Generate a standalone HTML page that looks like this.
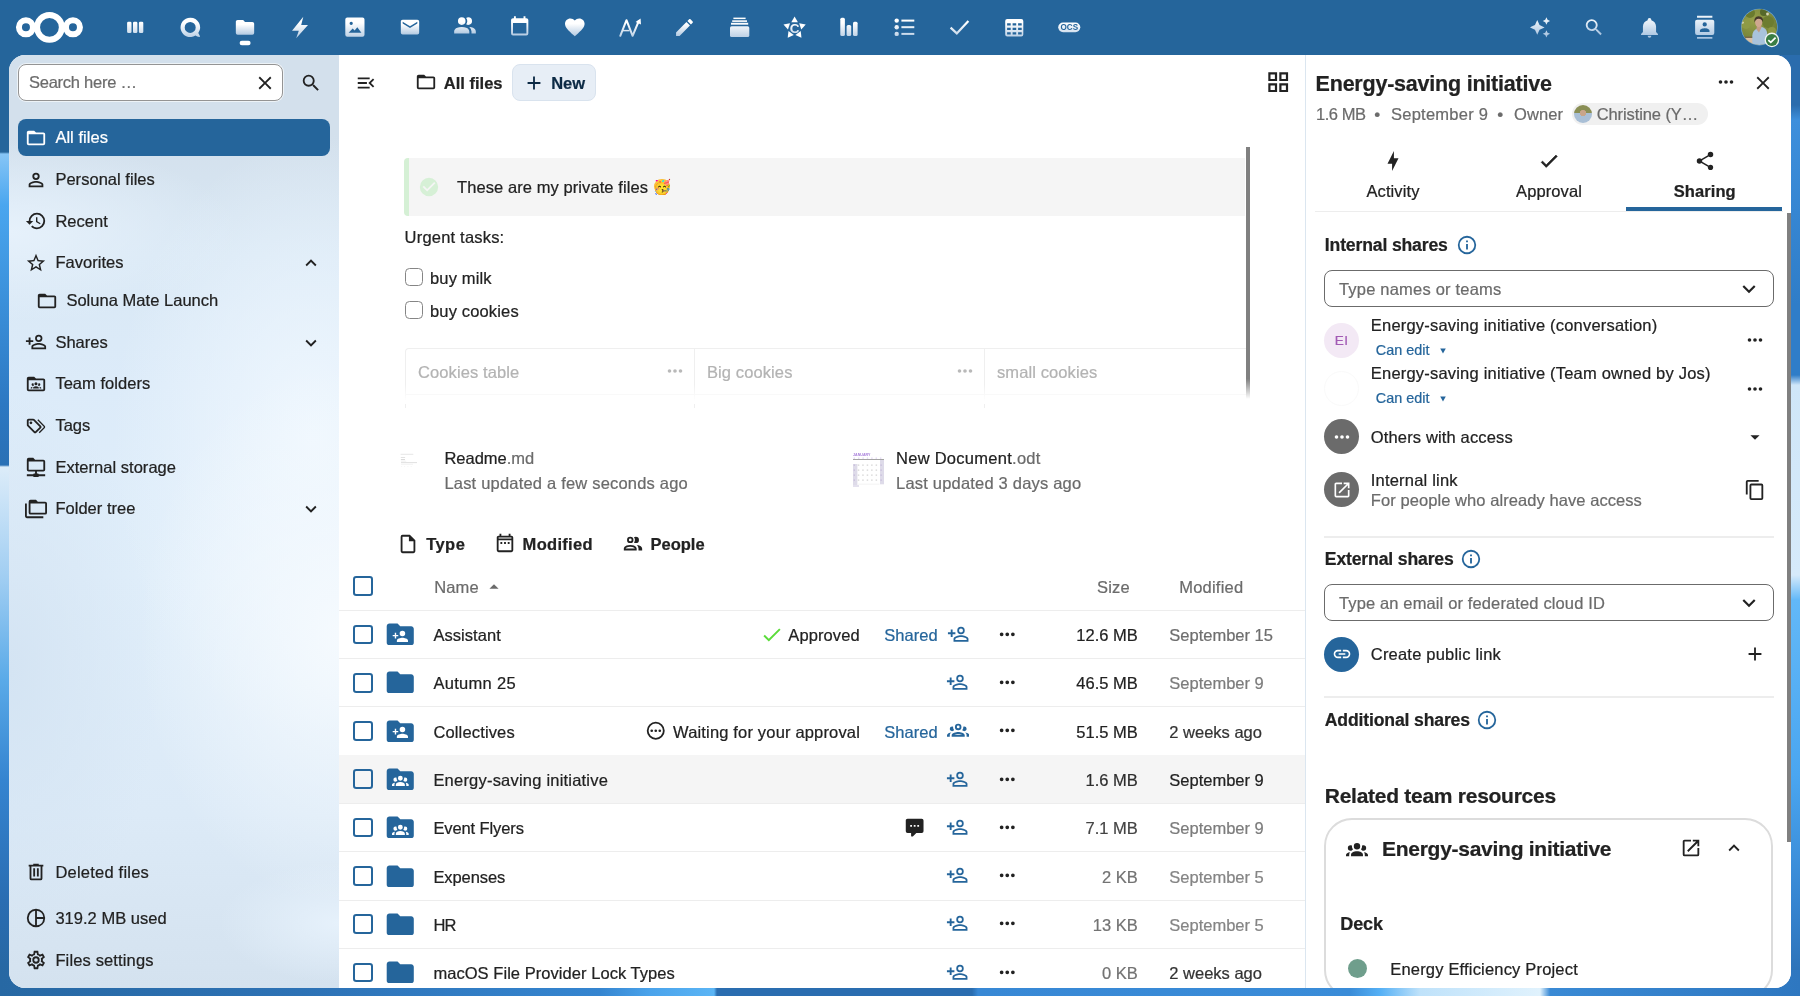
<!DOCTYPE html>
<html lang="en"><head><meta charset="utf-8"><title>All files - Nextcloud</title>
<style>
*{box-sizing:border-box;margin:0;padding:0}
html,body{width:1800px;height:996px;overflow:hidden}
body{font-family:"Liberation Sans",sans-serif;font-size:16.5px;color:#222;-webkit-text-stroke:.22px;background:#25659b;position:relative}
svg.ic{display:block;flex:none}
#bg{position:absolute;inset:0;background:#25659b}
#bgL{position:absolute;left:0;top:55px;width:30px;height:941px;background:linear-gradient(180deg,#25659b 0,#25659b 97px,#86c5f6 99px,#4aa6ef 150px,#3a8fd9 250px,#2d78c2 350px,#2a70b5 410px,#dcecf9 412px,#9fcdf2 525px,#5aaae8 625px,#3584d0 725px,#2a6db2 845px,#26669f 933px,#26669f 100%)}
#bgR{position:absolute;left:1770px;top:55px;width:30px;height:941px;background:linear-gradient(180deg,#2a6cad 0,#2a6cad 50px,#3d8fdc 65px,#2f7dc8 250px,#2f7dc8 320px,#cfe6f8 330px,#d6eafa 520px,#62b8f8 545px,#4aa6f0 720px,#3584d0 850px,#2a6db0 941px)}
#bgB{position:absolute;left:0;top:970px;width:1800px;height:26px;background:linear-gradient(90deg,#2768a3 0,#2d72b5 300px,#3585d0 600px,#4aa3eb 650px,#5bb5f5 714px,#2a6db0 717px,#2a6db0 972px,#3888d5 978px,#3a8cd8 1350px,#55b0f5 1380px,#bfe2fa 1420px,#e0f2fd 1540px,#3a8ad5 1550px,#2e77c0 1800px)}
#header{position:absolute;left:0;top:0;width:1800px;height:55px;background:#25659b}
#header .hi{position:absolute;top:16px;width:22px;height:22px;color:#fff}
#content{position:absolute;left:9px;top:55px;width:1782px;height:933px;border-radius:16px;overflow:hidden;background:#fff}
.abs{position:absolute}
/* nav */
#nav{position:absolute;left:0;top:0;width:330px;height:933px;background:
 radial-gradient(ellipse 200px 270px at 100% 62%,#f5fafe 0,rgba(245,250,254,0) 100%),
 radial-gradient(ellipse 200px 300px at 92% 41%,#eff7fe 0,rgba(239,247,254,0) 100%),
 radial-gradient(ellipse 120px 60px at 100% 93%,#e6f1fb 0,rgba(230,241,251,0) 100%),
 radial-gradient(ellipse 230px 90px at 0% 19%,#e6f1fb 0,rgba(230,241,251,0) 100%),
 radial-gradient(ellipse 150px 280px at 0% 66%,#d4e4f3 0,rgba(212,228,243,0) 100%),
 linear-gradient(180deg,#d3e0ec 0,#d3e0ec 80px,#d9e8f5 200px,#dcebf9 330px,#e0eefa 520px,#dceaf7 760px,#d4e2ef 933px)}
#nav .item{position:absolute;left:9px;width:312px;height:37px;border-radius:8px;display:flex;align-items:center;color:#222;white-space:nowrap}
#nav .item.active{background:#25659b;color:#fff}
#nav .item svg.lead{margin-left:7.2px}
#nav .item span.t{margin-left:8.2px;letter-spacing:.03px}
#nav .item svg.chev{position:absolute;right:8px;top:8px}
/* main */
#main{position:absolute;left:330px;top:0;width:966px;height:933px;background:#fff;overflow:hidden}
/* aside */
#aside{position:absolute;left:1296px;top:0;width:486px;height:933px;background:#fff;border-left:1px solid #dbe6f0;overflow:hidden}
#header,#nav,#main,#aside{will-change:transform}

</style></head>
<body>
<div id="bg"></div><div id="bgL"></div><div id="bgR"></div><div id="bgB"></div>
<div id="header">
<svg class="abs" style="left:0;top:0" width="1800" height="55" viewBox="0 0 1800 55">
<defs><linearGradient id="hg" gradientUnits="userSpaceOnUse" x1="0" y1="16" x2="0" y2="39"><stop offset="0" stop-color="#fff"/><stop offset=".3" stop-color="#fff"/><stop offset="1" stop-color="#b3cae2"/></linearGradient><linearGradient id="hgb" x1="0" y1="0" x2="0" y2="1"><stop offset="0" stop-color="#fff"/><stop offset=".3" stop-color="#fff"/><stop offset="1" stop-color="#b3cae2"/></linearGradient><linearGradient id="hg2b" x1="0" y1="0" x2="0" y2="1"><stop offset="0" stop-color="#eef4fa"/><stop offset=".25" stop-color="#e4edf6"/><stop offset="1" stop-color="#a3c0de"/></linearGradient></defs>
<g fill="none" stroke="#fff" stroke-width="6"><circle cx="49.45" cy="27.35" r="12.4"/><circle cx="25.95" cy="27.35" r="7"/><circle cx="72.95" cy="27.35" r="7"/></g>
<rect x="127.1" y="21.7" width="4.4" height="11.3" rx="1.3" fill="url(#hg)"/>
<rect x="133.0" y="21.7" width="4.4" height="11.3" rx="1.3" fill="url(#hg)"/>
<rect x="138.9" y="21.7" width="4.4" height="11.3" rx="1.3" fill="url(#hg)"/>
<path fill="url(#hg)" fill-rule="evenodd" d="M190.2 17.7a9.7 9.7 0 1 0 5.2 17.9c1.3.8 3.4 1.7 4.4 1.3.5-.5-.6-2.4-1.5-3.9A9.7 9.7 0 0 0 190.2 17.7Zm0 4.2a5.5 5.5 0 1 1 0 11a5.5 5.5 0 0 1 0-11Z"/>
<path fill="url(#hgb)" transform="translate(234.00,16.40) scale(0.9167)" d="M10,4H4C2.89,4 2,4.89 2,6V18A2,2 0 0,0 4,20H20A2,2 0 0,0 22,18V8C22,6.89 21.1,6 20,6H12L10,4Z"/>
<rect x="239.6" y="40.8" width="11" height="4.5" rx="2.25" fill="#fff"/>
<path fill="url(#hg)" d="M303.3 16.8L292 30.7H298.8L296.2 38.2L308 25.1H301.2Z"/>
<path fill="url(#hg)" fill-rule="evenodd" d="M347.3 17.5H362.5A2 2 0 0 1 364.5 19.5V34.7A2 2 0 0 1 362.5 36.7H347.3A2 2 0 0 1 345.3 34.7V19.5A2 2 0 0 1 347.3 17.5ZM351.2 21.8a1.6 1.6 0 1 0 .01 0ZM348.6 32.8H361.4L357.3 27.2L354.6 30.6L352.7 28.4Z"/>
<path fill="url(#hgb)" transform="translate(399.00,16.20) scale(0.9167)" d="M20,8L12,13L4,8V6L12,11L20,6M20,4H4C2.89,4 2,4.89 2,6V18A2,2 0 0,0 4,20H20A2,2 0 0,0 22,18V6C22,4.89 21.1,4 20,4Z"/>
<path fill="url(#hgb)" transform="translate(452.00,13.00) scale(1.0833)" d="M16 17V19H2V17S2 13 9 13 16 17 16 17M12.5 7.5A3.5 3.5 0 1 0 9 11A3.5 3.5 0 0 0 12.5 7.5M15.94 13A5.32 5.32 0 0 1 18 17V19H22V17S22 13.37 15.94 13M15 4A3.39 3.39 0 0 0 13.07 4.59A5 5 0 0 1 13.07 10.41A3.39 3.39 0 0 0 15 11A3.5 3.5 0 0 0 15 4Z"/>
<path fill="url(#hgb)" transform="translate(508.20,15.30) scale(0.9583)" d="M19,19H5V8H19M16,1V3H8V1H6V3H5C3.89,3 3,3.89 3,5V19A2,2 0 0,0 5,21H19A2,2 0 0,0 21,19V5C21,3.89 20.1,3 19,3H18V1"/>
<path fill="url(#hgb)" transform="translate(563.05,15.45) scale(0.9792)" d="M12,21.35L10.55,20.03C5.4,15.36 2,12.27 2,8.5C2,5.41 4.42,3 7.5,3C9.24,3 10.91,3.81 12,5.08C13.09,3.81 14.76,3 16.5,3C19.58,3 22,5.41 22,8.5C22,12.27 18.6,15.36 13.45,20.03L12,21.35Z"/>
<path fill="none" stroke="url(#hg)" stroke-width="2" stroke-linejoin="round" stroke-linecap="round" d="M620.3 35.8L626.5 20.2L632.6 35.8L638.8 21"/><path fill="none" stroke="url(#hg)" stroke-width="1.5" d="M622.5 30.6H629.5"/><path fill="url(#hg)" d="M640.6 18.4L641 24.6L635.6 22Z"/>
<path fill="url(#hgb)" transform="translate(673.25,16.25) scale(0.9375)" d="M20.71,7.04C21.1,6.65 21.1,6 20.71,5.63L18.37,3.29C18,2.9 17.35,2.9 16.96,3.29L15.12,5.12L18.87,8.87M3,17.25V21H6.75L17.81,9.93L14.06,6.18L3,17.25Z"/>
<rect x="733.4" y="17.6" width="12.2" height="1.5" fill="url(#hg)"/><rect x="732.2" y="20.3" width="14.8" height="1.6" fill="url(#hg)"/><rect x="731" y="22.8" width="17.2" height="1.9" fill="url(#hg)"/><rect x="730" y="26.3" width="19.3" height="10.7" rx="1.6" fill="url(#hg)"/>
<path fill="url(#hg)" d="M794.6 16.5L797.9 22.3H791.3Z" transform="rotate(0 794.6 28.2)"/>
<path fill="url(#hg)" d="M794.6 16.5L797.9 22.3H791.3Z" transform="rotate(72 794.6 28.2)"/>
<path fill="url(#hg)" d="M794.6 16.5L797.9 22.3H791.3Z" transform="rotate(144 794.6 28.2)"/>
<path fill="url(#hg)" d="M794.6 16.5L797.9 22.3H791.3Z" transform="rotate(216 794.6 28.2)"/>
<path fill="url(#hg)" d="M794.6 16.5L797.9 22.3H791.3Z" transform="rotate(288 794.6 28.2)"/>
<text x="794.7" y="33.3" text-anchor="middle" font-family="Liberation Sans,sans-serif" font-weight="bold" font-size="13.5" fill="url(#hg)">C</text>
<rect x="840.3" y="17.8" width="4.6" height="18.1" rx="1.5" fill="url(#hg)"/><rect x="846.6" y="24.9" width="4.6" height="11" rx="1.5" fill="url(#hg)"/><rect x="853" y="21.7" width="4.6" height="14.2" rx="1.5" fill="url(#hg)"/>
<circle cx="896.7" cy="20.6" r="2.2" fill="url(#hg)"/><rect x="901.4" y="19.6" width="12.9" height="2" fill="url(#hg)"/>
<circle cx="896.7" cy="27.2" r="2.2" fill="url(#hg)"/><rect x="901.4" y="26.2" width="12.9" height="2" fill="url(#hg)"/>
<circle cx="896.7" cy="33.9" r="2.2" fill="url(#hg)"/><rect x="901.4" y="32.9" width="12.9" height="2" fill="url(#hg)"/>
<path fill="none" stroke="url(#hg)" stroke-width="2.2" d="M950.6 27.6L956.8 33.4L968.4 20.9"/>
<path fill="url(#hg)" fill-rule="evenodd" d="M1007.2 19.1H1021.3A2 2 0 0 1 1023.3 21.1V34.6A2 2 0 0 1 1021.3 36.6H1007.2A2 2 0 0 1 1005.2 34.6V21.1A2 2 0 0 1 1007.2 19.1ZM1007.1 23.3h3.6v2.2h-3.6ZM1007.1 27.8h3.6v2.2h-3.6ZM1007.1 32.3h3.6v2.2h-3.6ZM1012.6 23.3h3.6v2.2h-3.6ZM1012.6 27.8h3.6v2.2h-3.6ZM1012.6 32.3h3.6v2.2h-3.6ZM1018.1 23.3h3.6v2.2h-3.6ZM1018.1 27.8h3.6v2.2h-3.6ZM1018.1 32.3h3.6v2.2h-3.6Z"/>
<rect x="1058.2" y="22.5" width="22.1" height="9.7" rx="4.85" fill="url(#hg)"/><text x="1069.3" y="30.4" text-anchor="middle" font-family="Liberation Sans,sans-serif" font-weight="bold" font-size="8.4" fill="#25659b" textLength="17.6" lengthAdjust="spacingAndGlyphs">OCS</text>
<defs><linearGradient id="hg2" gradientUnits="userSpaceOnUse" x1="0" y1="16" x2="0" y2="39"><stop offset="0" stop-color="#eef4fa"/><stop offset=".25" stop-color="#e6eef7"/><stop offset="1" stop-color="#a3c0de"/></linearGradient></defs>
<path fill="url(#hg2b)" transform="translate(1529.00,16.40) scale(0.9167)" d="M19,1L17.74,3.75L15,5L17.74,6.26L19,9L20.25,6.26L23,5L20.25,3.75M9,4L6.5,9.5L1,12L6.5,14.5L9,20L11.5,14.5L17,12L11.5,9.5M19,15L17.74,17.74L15,19L17.74,20.25L19,23L20.25,20.25L23,19L20.25,17.74"/>
<path fill="url(#hg2b)" transform="translate(1583.00,16.40) scale(0.9167)" d="M9.5,3A6.5,6.5 0 0,1 16,9.5C16,11.11 15.41,12.59 14.44,13.73L14.71,14H15.5L20.5,19L19,20.5L14,15.5V14.71L13.73,14.44C12.59,15.41 11.11,16 9.5,16A6.5,6.5 0 0,1 3,9.5A6.5,6.5 0 0,1 9.5,3M9.5,5C7,5 5,7 5,9.5C5,12 7,14 9.5,14C12,14 14,12 14,9.5C14,7 12,5 9.5,5Z"/>
<path fill="url(#hg2b)" transform="translate(1638.25,16.15) scale(0.9375)" d="M21,19V20H3V19L5,17V11C5,7.9 7.03,5.17 10,4.29C10,4.19 10,4.1 10,4A2,2 0 0,1 12,2A2,2 0 0,1 14,4C14,4.1 14,4.19 14,4.29C16.97,5.17 19,7.9 19,11V17L21,19M14,21A2,2 0 0,1 12,23A2,2 0 0,1 10,21"/>
<path fill="url(#hg2b)" transform="translate(1693.20,15.80) scale(0.9583)" d="M20,0H4V2H20V0M4,24H20V22H4V24M20,4H4A2,2 0 0,0 2,6V18A2,2 0 0,0 4,20H20A2,2 0 0,0 22,18V6A2,2 0 0,0 20,4M12,6.75A2.25,2.25 0 0,1 14.25,9A2.25,2.25 0 0,1 12,11.25A2.25,2.25 0 0,1 9.75,9A2.25,2.25 0 0,1 12,6.75M17,17H7V15.5C7,13.83 10.33,13 12,13C13.67,13 17,13.83 17,15.5V17Z"/>
</svg>
<svg class="abs" style="left:1738px;top:6px" width="46" height="46" viewBox="1738 6 46 46">
<defs><clipPath id="avc"><circle cx="1759.35" cy="27.1" r="17.8"/></clipPath>
<radialGradient id="avg" cx="0.35" cy="0.3" r="0.8"><stop offset="0" stop-color="#97a04a"/><stop offset=".6" stop-color="#79863a"/><stop offset="1" stop-color="#5f6e2c"/></radialGradient></defs>
<circle cx="1759.35" cy="27.1" r="18.4" fill="#6ea4d8"/>
<g clip-path="url(#avc)">
<rect x="1740" y="8" width="40" height="40" fill="url(#avg)"/>
<circle cx="1750" cy="13" r="5" fill="#6a7a2e"/><circle cx="1768" cy="22" r="6" fill="#6d7c30"/><circle cx="1764" cy="12" r="4" fill="#56682a"/><circle cx="1746" cy="24" r="5" fill="#8e9a45"/><circle cx="1772" cy="31" r="4" fill="#8d9843"/>
<circle cx="1767.5" cy="14" r="1.4" fill="#d8d6b8"/><circle cx="1742.6" cy="22.6" r="1.2" fill="#d9d7b5"/>
<rect x="1740" y="36.5" width="14" height="2" fill="#7b6a45"/>
<rect x="1740" y="38" width="14" height="10" fill="#d8bfa6"/>
<path d="M1752.3 46V35.5Q1752.6 30.5 1757 28.5L1761.5 26.8Q1766.5 28.2 1767.2 33V46Z" fill="#a9c3dc"/>
<path d="M1756.5 29.5L1759 32.5L1761.5 27.5L1760.5 24H1757Z" fill="#c49c84"/>
<ellipse cx="1758.7" cy="22.6" rx="3.6" ry="4.6" fill="#cfa78f"/>
<path d="M1754.4 22.5Q1753.6 16.5 1758.6 16.2Q1763.6 16.3 1763 22Q1762 19 1758.6 18.8Q1755.6 19 1754.4 22.5Z" fill="#46372b"/>
</g>
<circle cx="1771.9" cy="39.9" r="7.3" fill="#f2f6f2"/><circle cx="1771.9" cy="39.9" r="6" fill="#3a7d44"/>
<path fill="none" stroke="#fff" stroke-width="1.7" d="M1768.3 40.1L1770.8 42.4L1775.6 37.6"/>
</svg>
</div>
<div id="content">
<div id="nav">
<div class="abs" style="left:9px;top:9px;width:265px;height:37px;border-radius:8px;background:#fff;border:1px solid #949494;box-shadow:0 0 0 1px rgba(255,255,255,.6)"></div>
<div class="abs" style="left:20px;top:9px;height:37px;line-height:37px;color:#6b6b6b;letter-spacing:-.25px">Search here …</div>
<svg class="ic " width="22" height="22" viewBox="0 0 24 24" style="position:absolute;left:245px;top:16.5px"><path fill="#222" d="M19,6.41L17.59,5L12,10.59L6.41,5L5,6.41L10.59,12L5,17.59L6.41,19L12,13.41L17.59,19L19,17.59L13.41,12L19,6.41Z"/></svg>
<svg class="ic " width="22" height="22" viewBox="0 0 24 24" style="position:absolute;left:291px;top:16.5px"><path fill="#222" d="M9.5,3A6.5,6.5 0 0,1 16,9.5C16,11.11 15.41,12.59 14.44,13.73L14.71,14H15.5L20.5,19L19,20.5L14,15.5V14.71L13.73,14.44C12.59,15.41 11.11,16 9.5,16A6.5,6.5 0 0,1 3,9.5A6.5,6.5 0 0,1 9.5,3M9.5,5C7,5 5,7 5,9.5C5,12 7,14 9.5,14C12,14 14,12 14,9.5C14,7 12,5 9.5,5Z"/></svg>
<div class="item active" style="top:64px;"><svg class="ic lead" width="22" height="22" viewBox="0 0 24 24" style="margin-left:7.2px"><path fill="currentColor" d="M20,18H4V8H20M20,6H12L10,4H4C2.89,4 2,4.89 2,6V18A2,2 0 0,0 4,20H20A2,2 0 0,0 22,18V8C22,6.89 21.1,6 20,6Z"/></svg><span class="t">All files</span></div>
<div class="item" style="top:106px;"><svg class="ic lead" width="22" height="22" viewBox="0 0 24 24" style="margin-left:7.2px"><path fill="currentColor" d="M12,4A4,4 0 0,1 16,8A4,4 0 0,1 12,12A4,4 0 0,1 8,8A4,4 0 0,1 12,4M12,6A2,2 0 0,0 10,8A2,2 0 0,0 12,10A2,2 0 0,0 14,8A2,2 0 0,0 12,6M12,13C14.67,13 20,14.33 20,17V20H4V17C4,14.33 9.33,13 12,13M12,14.9C9.03,14.9 5.9,16.36 5.9,17V18.1H18.1V17C18.1,16.36 14.97,14.9 12,14.9Z"/></svg><span class="t">Personal files</span></div>
<div class="item" style="top:147.5px;"><svg class="ic lead" width="22" height="22" viewBox="0 0 24 24" style="margin-left:7.2px"><path fill="currentColor" d="M13.5,8H12V13L16.28,15.54L17,14.33L13.5,12.25V8M13,3A9,9 0 0,0 4,12H1L4.96,16.03L9,12H6A7,7 0 0,1 13,5A7,7 0 0,1 20,12A7,7 0 0,1 13,19C11.07,19 9.32,18.21 8.06,16.94L6.64,18.36C8.27,20 10.5,21 13,21A9,9 0 0,0 22,12A9,9 0 0,0 13,3"/></svg><span class="t">Recent</span></div>
<div class="item" style="top:189px;"><svg class="ic lead" width="22" height="22" viewBox="0 0 24 24" style="margin-left:7.2px"><path fill="currentColor" d="M12,15.39L8.24,17.66L9.23,13.38L5.91,10.5L10.29,10.13L12,6.09L13.71,10.13L18.09,10.5L14.77,13.38L15.76,17.66M22,9.24L14.81,8.63L12,2L9.19,8.63L2,9.24L7.45,13.97L5.82,21L12,17.27L18.18,21L16.54,13.97L22,9.24Z"/></svg><span class="t">Favorites</span><svg class="ic chev" width="22" height="22" viewBox="0 0 24 24" style=""><path fill="currentColor" d="M7.41,15.41L12,10.83L16.59,15.41L18,14L12,8L6,14L7.41,15.41Z"/></svg></div>
<div class="item" style="top:227px;"><svg class="ic lead" width="22" height="22" viewBox="0 0 24 24" style="margin-left:18.2px"><path fill="currentColor" d="M20,18H4V8H20M20,6H12L10,4H4C2.89,4 2,4.89 2,6V18A2,2 0 0,0 4,20H20A2,2 0 0,0 22,18V8C22,6.89 21.1,6 20,6Z"/></svg><span class="t">Soluna Mate Launch</span></div>
<div class="item" style="top:268.5px;"><svg class="ic lead" width="22" height="22" viewBox="0 0 24 24" style="margin-left:7.2px"><path fill="currentColor" d="M15,4A4,4 0 0,0 11,8A4,4 0 0,0 15,12A4,4 0 0,0 19,8A4,4 0 0,0 15,4M15,5.9C16.16,5.9 17.1,6.84 17.1,8C17.1,9.16 16.16,10.1 15,10.1A2.1,2.1 0 0,1 12.9,8A2.1,2.1 0 0,1 15,5.9M4,7V10H1V12H4V15H6V12H9V10H6V7H4M15,13C12.33,13 7,14.33 7,17V20H23V17C23,14.33 17.67,13 15,13M15,14.9C17.97,14.9 21.1,16.36 21.1,17V18.1H8.9V17C8.9,16.36 12,14.9 15,14.9Z"/></svg><span class="t">Shares</span><svg class="ic chev" width="22" height="22" viewBox="0 0 24 24" style=""><path fill="currentColor" d="M7.41,8.58L12,13.17L16.59,8.58L18,10L12,16L6,10L7.41,8.58Z"/></svg></div>
<div class="item" style="top:310px;"><svg class="ic lead" width="22" height="22" viewBox="0 0 24 24" style="margin-left:7.2px"><path fill="currentColor" d="M20,18H4V8H20M20,6H12L10,4H4C2.89,4 2,4.89 2,6V18A2,2 0 0,0 4,20H20A2,2 0 0,0 22,18V8C22,6.89 21.1,6 20,6Z"/><g transform="translate(6.2,7.4) scale(0.48)"><path fill="currentColor" d="M12,5.5A3.5,3.5 0 0,1 15.5,9A3.5,3.5 0 0,1 12,12.5A3.5,3.5 0 0,1 8.5,9A3.5,3.5 0 0,1 12,5.5M5,8C5.56,8 6.08,8.15 6.53,8.42C6.38,9.85 6.8,11.27 7.66,12.38C7.16,13.34 6.16,14 5,14A3,3 0 0,1 2,11A3,3 0 0,1 5,8M19,8A3,3 0 0,1 22,11A3,3 0 0,1 19,14C17.84,14 16.84,13.34 16.34,12.38C17.2,11.27 17.62,9.85 17.47,8.42C17.92,8.15 18.44,8 19,8M5.5,18.25C5.5,16.18 8.41,14.5 12,14.5C15.59,14.5 18.5,16.18 18.5,18.25V20H5.5V18.25M0,20V18.5C0,17.11 1.89,15.94 4.45,15.6C3.86,16.28 3.5,17.22 3.5,18.25V20H0M24,20H20.5V18.25C20.5,17.22 20.14,16.28 19.55,15.6C22.11,15.94 24,17.11 24,18.5V20Z"/></g></svg><span class="t">Team folders</span></div>
<div class="item" style="top:352px;"><svg class="ic lead" width="22" height="22" viewBox="0 0 24 24" style="margin-left:7.2px"><path fill="currentColor" d="M6.5 10C7.3 10 8 9.3 8 8.5S7.3 7 6.5 7 5 7.7 5 8.5 5.7 10 6.5 10M9 6L16 13L11 18L4 11V6H9M9 4H4C2.9 4 2 4.9 2 6V11C2 11.6 2.2 12.1 2.6 12.4L9.6 19.4C9.9 19.8 10.4 20 11 20S12.1 19.8 12.4 19.4L17.4 14.4C17.8 14 18 13.5 18 13C18 12.4 17.8 11.9 17.4 11.6L10.4 4.6C10.1 4.2 9.6 4 9 4M13.5 5.7L14.5 4.7L21.4 11.6C21.8 12 22 12.5 22 13S21.8 14.1 21.4 14.4L16 19.8L15 18.8L20.7 13L13.5 5.7Z"/></svg><span class="t">Tags</span></div>
<div class="item" style="top:393.5px;"><svg class="ic lead" width="22" height="22" viewBox="0 0 24 24" style="margin-left:7.2px"><path fill="currentColor" d="M4,2H9L11,4H20A2,2 0 0,1 22,6V15A2,2 0 0,1 20,17H13V19H14A1,1 0 0,1 15,20H22V22H15A1,1 0 0,1 14,23H10A1,1 0 0,1 9,22H2V20H9A1,1 0 0,1 10,19H11V17H4A2,2 0 0,1 2,15V4A2,2 0 0,1 4,2M4,6V15H20V6H4Z"/></svg><span class="t">External storage</span></div>
<div class="item" style="top:435px;"><svg class="ic lead" width="22" height="22" viewBox="0 0 24 24" style="margin-left:7.2px"><path fill="currentColor" d="M22,4A2,2 0 0,1 24,6V16A2,2 0 0,1 22,18H6A2,2 0 0,1 4,16V4A2,2 0 0,1 6,2H12L14,4H22M2,6V20H20V22H2A2,2 0 0,1 0,20V11H0V6H2M6,6V16H22V6H6Z"/></svg><span class="t">Folder tree</span><svg class="ic chev" width="22" height="22" viewBox="0 0 24 24" style=""><path fill="currentColor" d="M7.41,8.58L12,13.17L16.59,8.58L18,10L12,16L6,10L7.41,8.58Z"/></svg></div>
<div class="item" style="top:798.5px;"><svg class="ic lead" width="22" height="22" viewBox="0 0 24 24" style="margin-left:7.2px"><path fill="currentColor" d="M9,3V4H4V6H5V19A2,2 0 0,0 7,21H17A2,2 0 0,0 19,19V6H20V4H15V3H9M7,6H17V19H7V6M9,8V17H11V8H9M13,8V17H15V8H13Z"/></svg><span class="t"><span style="letter-spacing:.22px">Deleted files</span></span></div>
<div class="item" style="top:844.5px;"><svg class="ic lead" width="22" height="22" viewBox="0 0 24 24" style="margin-left:7.2px"><path fill="currentColor" d="M12,2A10,10 0 1,0 22,12A10,10 0 0,0 12,2M13,4.07A8,8 0 0,1 19.93,11H13M4,12A8,8 0 0,1 11,4.07V19.93A8,8 0 0,1 4,12M13,19.93V13H19.93A8,8 0 0,1 13,19.93Z"/></svg><span class="t">319.2 MB used</span></div>
<div class="item" style="top:886.5px;"><svg class="ic lead" width="22" height="22" viewBox="0 0 24 24" style="margin-left:7.2px"><path fill="currentColor" d="M12,8A4,4 0 0,1 16,12A4,4 0 0,1 12,16A4,4 0 0,1 8,12A4,4 0 0,1 12,8M12,10A2,2 0 0,0 10,12A2,2 0 0,0 12,14A2,2 0 0,0 14,12A2,2 0 0,0 12,10M10,22C9.75,22 9.54,21.82 9.5,21.58L9.13,18.93C8.5,18.68 7.96,18.34 7.44,17.94L4.95,18.95C4.73,19.03 4.46,18.95 4.34,18.73L2.34,15.27C2.21,15.05 2.27,14.78 2.46,14.63L4.57,12.97L4.5,12L4.57,11L2.46,9.37C2.27,9.22 2.21,8.95 2.34,8.73L4.34,5.27C4.46,5.05 4.73,4.96 4.95,5.05L7.44,6.05C7.96,5.66 8.5,5.32 9.13,5.07L9.5,2.42C9.54,2.18 9.75,2 10,2H14C14.25,2 14.46,2.18 14.5,2.42L14.87,5.07C15.5,5.32 16.04,5.66 16.56,6.05L19.05,5.05C19.27,4.96 19.54,5.05 19.66,5.27L21.66,8.73C21.79,8.95 21.73,9.22 21.54,9.37L19.43,11L19.5,12L19.43,13L21.54,14.63C21.73,14.78 21.79,15.05 21.66,15.27L19.66,18.73C19.54,18.95 19.27,19.04 19.05,18.95L16.56,17.95C16.04,18.34 15.5,18.68 14.87,18.93L14.5,21.58C14.46,21.82 14.25,22 14,22H10M11.25,4L10.88,6.61C9.68,6.86 8.62,7.5 7.85,8.39L5.44,7.35L4.69,8.65L6.8,10.2C6.4,11.37 6.4,12.64 6.8,13.8L4.68,15.36L5.43,16.66L7.86,15.62C8.63,16.5 9.68,17.14 10.87,17.38L11.24,20H12.76L13.13,17.39C14.32,17.14 15.37,16.5 16.14,15.62L18.57,16.66L19.32,15.36L17.2,13.81C17.6,12.64 17.6,11.37 17.2,10.2L19.31,8.65L18.56,7.35L16.15,8.39C15.38,7.5 14.32,6.86 13.12,6.62L12.75,4H11.25Z"/></svg><span class="t"><span style="letter-spacing:.14px">Files settings</span></span></div>
</div>
<div id="main">
<svg class="ic " width="22" height="22" viewBox="0 0 24 24" style="position:absolute;left:16.0px;top:16.5px;"><path fill="#222" d="M21,15.61L19.59,17L14.58,12L19.59,7L21,8.39L17.44,12L21,15.61M3,6H16V8H3V6M3,13V11H13V13H3M3,18V16H16V18H3Z"/></svg>
<svg class="ic " width="22" height="22" viewBox="0 0 24 24" style="position:absolute;left:76.4px;top:16.3px;"><path fill="#222" d="M20,18H4V8H20M20,6H12L10,4H4C2.89,4 2,4.89 2,6V18A2,2 0 0,0 4,20H20A2,2 0 0,0 22,18V8C22,6.89 21.1,6 20,6Z"/></svg>
<div style="position:absolute;left:104.8px;top:15.5px;height:24px;line-height:24px;white-space:nowrap;font-weight:bold">All files</div>
<div style="position:absolute;left:173.0px;top:9.0px;width:84px;height:37px;background:#e7eef6;border:1px solid #d9e3ee;border-radius:8px"></div>
<svg class="ic " width="22" height="22" viewBox="0 0 24 24" style="position:absolute;left:183.8px;top:16.5px;"><path fill="#0c2a45" d="M19,13H13V19H11V13H5V11H11V5H13V11H19V13Z"/></svg>
<div style="position:absolute;left:212.2px;top:15.5px;height:24px;line-height:24px;white-space:nowrap;font-weight:bold;color:#0c2a45">New</div>
<svg class="ic " width="26.4" height="26.4" viewBox="0 0 24 24" style="position:absolute;left:925.5px;top:14.3px;"><path fill="#222" d="M3 11H11V3H3M5 5H9V9H5M13 21H21V13H13M15 15H19V19H15M3 21H11V13H3M5 15H9V19H5M13 3V11H21V3M19 9H15V5H19Z"/></svg>
<div style="position:absolute;left:65.3px;top:103.0px;width:841px;height:57.6px;background:#f5f5f5;border-left:5px solid #d5f0d5;border-radius:4px 0 0 4px"></div>
<svg class="ic " width="22" height="22" viewBox="0 0 24 24" style="position:absolute;left:78.8px;top:120.8px;"><path fill="#d6f0d6" d="M12,2A10,10 0 0,0 2,12A10,10 0 0,0 12,22A10,10 0 0,0 22,12A10,10 0 0,0 12,2M10,17L5,12L6.41,10.59L10,14.17L17.59,6.58L19,8L10,17Z"/></svg>
<div style="position:absolute;left:315.0px;top:123.8px;width:15.5px;height:15.5px;border-radius:50%;background:radial-gradient(circle at 45% 40%,#ffd35a 0,#f7b52c 70%,#e79a1e 100%)"></div>
<div style="position:absolute;left:118.0px;top:119.8px;height:24px;line-height:24px;white-space:nowrap;letter-spacing:.08px">These are my private files <span style="font-size:14.5px;letter-spacing:0;position:relative;left:.5px;top:-1px">🥳</span></div>
<div style="position:absolute;left:65.6px;top:170.0px;height:24px;line-height:24px;white-space:nowrap;letter-spacing:.2px">Urgent tasks:</div>
<div style="position:absolute;left:66.4px;top:213.3px;width:17.6px;height:17.6px;border:1.5px solid #858585;border-radius:4.5px;background:#fff"></div>
<div style="position:absolute;left:91.0px;top:210.7px;height:24px;line-height:24px;white-space:nowrap;letter-spacing:.15px">buy milk</div>
<div style="position:absolute;left:66.4px;top:246.4px;width:17.6px;height:17.6px;border:1.5px solid #858585;border-radius:4.5px;background:#fff"></div>
<div style="position:absolute;left:91.0px;top:243.8px;height:24px;line-height:24px;white-space:nowrap;letter-spacing:.15px">buy cookies</div>
<div style="position:absolute;left:65.5px;top:293.0px;width:841px;height:60px;border:1px solid #efefef;border-right:none;border-radius:4px 0 0 0;border-bottom:none"></div>
<div style="position:absolute;left:65.5px;top:339.2px;width:841px;height:1px;background:#efefef"></div>
<div style="position:absolute;left:354.5px;top:293.0px;width:1px;height:60px;background:#efefef"></div>
<div style="position:absolute;left:644.5px;top:293.0px;width:1px;height:60px;background:#efefef"></div>
<div style="position:absolute;left:79.0px;top:305.0px;height:24px;line-height:24px;white-space:nowrap;color:#b3b3b3;letter-spacing:.1px">Cookies table</div>
<div style="position:absolute;left:368.0px;top:305.0px;height:24px;line-height:24px;white-space:nowrap;color:#b3b3b3;letter-spacing:.1px">Big cookies</div>
<div style="position:absolute;left:658.0px;top:305.0px;height:24px;line-height:24px;white-space:nowrap;color:#b3b3b3;letter-spacing:.1px">small cookies</div>
<svg class="ic " width="22" height="22" viewBox="0 0 24 24" style="position:absolute;left:324.7px;top:305.3px;"><path fill="#b9b9b9" d="M16,12A2,2 0 0,1 18,10A2,2 0 0,1 20,12A2,2 0 0,1 18,14A2,2 0 0,1 16,12M10,12A2,2 0 0,1 12,10A2,2 0 0,1 14,12A2,2 0 0,1 12,14A2,2 0 0,1 10,12M4,12A2,2 0 0,1 6,10A2,2 0 0,1 8,12A2,2 0 0,1 6,14A2,2 0 0,1 4,12Z"/></svg>
<svg class="ic " width="22" height="22" viewBox="0 0 24 24" style="position:absolute;left:614.5px;top:305.3px;"><path fill="#b9b9b9" d="M16,12A2,2 0 0,1 18,10A2,2 0 0,1 20,12A2,2 0 0,1 18,14A2,2 0 0,1 16,12M10,12A2,2 0 0,1 12,10A2,2 0 0,1 14,12A2,2 0 0,1 12,14A2,2 0 0,1 10,12M4,12A2,2 0 0,1 6,10A2,2 0 0,1 8,12A2,2 0 0,1 6,14A2,2 0 0,1 4,12Z"/></svg>
<div style="position:absolute;left:61.0px;top:329.0px;width:846px;height:20px;background:linear-gradient(rgba(255,255,255,0),#fff 85%)"></div>
<div style="position:absolute;left:906.6px;top:92.0px;width:4.6px;height:252px;background:linear-gradient(#808080 0,#808080 92%,rgba(128,128,128,0) 100%)"></div>
<svg style="position:absolute;left:60.0px;top:395.0px;" width="22" height="22" viewBox="399 450 22 22"><g fill="#e3e3e3"><rect x="400.6" y="453.8" width="12.7" height="1" fill="#e6e6e6"/><rect x="400.8" y="457" width="4.3" height="1" fill="#e2e2e2"/><rect x="400.9" y="459" width="4.1" height="1.1" fill="#dadada"/><rect x="401" y="460.8" width="5.2" height=".8" fill="#eeeeee"/><rect x="401" y="462.1" width="16" height="1" fill="#e0e0e0"/><rect x="401" y="463.8" width="12" height=".8" fill="#efefef"/><rect x="401" y="466.2" width="1.2" height=".7" fill="#f3f3f3"/><rect x="404" y="466.2" width="1.2" height=".7" fill="#f3f3f3"/><rect x="407.3" y="466.2" width="1.2" height=".7" fill="#f3f3f3"/><rect x="410.6" y="466.2" width="1.2" height=".7" fill="#f3f3f3"/></g></svg>
<div style="position:absolute;left:105.4px;top:391.0px;height:24px;line-height:24px;white-space:nowrap;letter-spacing:0">Readme<span style="color:#6b6b6b">.md</span></div>
<div style="position:absolute;left:105.4px;top:416.0px;height:24px;line-height:24px;white-space:nowrap;color:#6b6b6b;letter-spacing:.2px">Last updated a few seconds ago</div>
<svg style="position:absolute;left:511.0px;top:394.0px;" width="38" height="42" viewBox="850 449 38 42">
<text x="853" y="455.6" font-family="Liberation Sans,sans-serif" font-weight="bold" font-size="4.1" fill="#a77ddb" textLength="17.5" lengthAdjust="spacingAndGlyphs">JANUARY</text>
<g fill="#d9c8ef"><rect x="853.6" y="457.6" width="1.4" height="1"/><rect x="858.0" y="457.6" width="1.4" height="1"/><rect x="862.4" y="457.6" width="1.4" height="1"/><rect x="866.8" y="457.6" width="1.4" height="1"/><rect x="871.2" y="457.6" width="1.4" height="1"/><rect x="875.6" y="457.6" width="1.4" height="1"/><rect x="880.0" y="457.6" width="1.4" height="1"/></g>
<rect x="853" y="459.1" width="31" height=".9" fill="#9a9a9a"/>
<rect x="880" y="460" width="4" height="24.3" fill="#dedbe9"/>
<rect x="853" y="464" width="4.4" height="22.6" fill="#dedbe9"/>
<rect x="853" y="485" width="6" height="2" fill="#e4e1ee"/>
<g fill="#c9c9c9"><rect x="857.8" y="464.6" width="1.5" height="1"/><rect x="862.2" y="464.6" width="1.5" height="1"/><rect x="866.7" y="464.6" width="1.5" height="1"/><rect x="871.1" y="464.6" width="1.5" height="1"/><rect x="875.6" y="464.6" width="1.5" height="1"/><rect x="857.8" y="469.6" width="1.5" height="1"/><rect x="862.2" y="469.6" width="1.5" height="1"/><rect x="866.7" y="469.6" width="1.5" height="1"/><rect x="871.1" y="469.6" width="1.5" height="1"/><rect x="875.6" y="469.6" width="1.5" height="1"/><rect x="857.8" y="474.6" width="1.5" height="1"/><rect x="862.2" y="474.6" width="1.5" height="1"/><rect x="866.7" y="474.6" width="1.5" height="1"/><rect x="871.1" y="474.6" width="1.5" height="1"/><rect x="875.6" y="474.6" width="1.5" height="1"/><rect x="857.8" y="479.6" width="1.5" height="1"/><rect x="862.2" y="479.6" width="1.5" height="1"/><rect x="866.7" y="479.6" width="1.5" height="1"/><rect x="871.1" y="479.6" width="1.5" height="1"/><rect x="875.6" y="479.6" width="1.5" height="1"/></g>
<g fill="#bfb3d6"><rect x="880.4" y="464.6" width="1.4" height="1"/><rect x="853.6" y="464.6" width="1.4" height="1"/><rect x="880.4" y="469.6" width="1.4" height="1"/><rect x="853.6" y="469.6" width="1.4" height="1"/><rect x="880.4" y="474.6" width="1.4" height="1"/><rect x="853.6" y="474.6" width="1.4" height="1"/><rect x="880.4" y="479.6" width="1.4" height="1"/><rect x="853.6" y="479.6" width="1.4" height="1"/></g>
<rect x="857.6" y="483.8" width="22" height=".6" fill="#ececec"/>
</svg>
<div style="position:absolute;left:557.0px;top:391.0px;height:24px;line-height:24px;white-space:nowrap;letter-spacing:.27px">New Document<span style="color:#6b6b6b">.odt</span></div>
<div style="position:absolute;left:557.0px;top:416.0px;height:24px;line-height:24px;white-space:nowrap;color:#6b6b6b;letter-spacing:.2px">Last updated 3 days ago</div>
<svg class="ic " width="22" height="22" viewBox="0 0 24 24" style="position:absolute;left:58.2px;top:477.7px;"><path fill="#222" d="M14,2H6A2,2 0 0,0 4,4V20A2,2 0 0,0 6,22H18A2,2 0 0,0 20,20V8L14,2M18,20H6V4H13V9H18V20Z"/></svg>
<div style="position:absolute;left:87.2px;top:477.0px;height:24px;line-height:24px;white-space:nowrap;font-weight:bold;letter-spacing:.45px">Type</div>
<svg class="ic " width="22" height="22" viewBox="0 0 24 24" style="position:absolute;left:155.3px;top:477.2px;"><path fill="#222" d="M7,11H9V13H7V11M11,11H13V13H11V11M15,11H17V13H15V11M19,4H18V2H16V4H8V2H6V4H5C3.89,4 3,4.9 3,6V20A2,2 0 0,0 5,22H19A2,2 0 0,0 21,20V6A2,2 0 0,0 19,4M19,20H5V9H19V20M19,7H5V6H19V7Z"/></svg>
<div style="position:absolute;left:183.6px;top:477.0px;height:24px;line-height:24px;white-space:nowrap;font-weight:bold;letter-spacing:.3px">Modified</div>
<svg class="ic " width="22" height="22" viewBox="0 0 24 24" style="position:absolute;left:283.3px;top:477.7px;"><path fill="#222" d="M13.07 10.41A5 5 0 0 0 13.07 4.59A3.39 3.39 0 0 1 15 4A3.5 3.5 0 0 1 15 11A3.39 3.39 0 0 1 13.07 10.41M5.5 7.5A3.5 3.5 0 1 1 9 11A3.5 3.5 0 0 1 5.5 7.5M7.5 7.5A1.5 1.5 0 1 0 9 6A1.5 1.5 0 0 0 7.5 7.5M16 17V19H2V17S2 13 9 13 16 17 16 17M14 17C13.86 16.22 12.67 15 9 15S4.07 16.31 4 17M15.95 13A5.32 5.32 0 0 1 18 17V19H22V17S22 13.37 15.94 13Z"/></svg>
<div style="position:absolute;left:311.5px;top:477.0px;height:24px;line-height:24px;white-space:nowrap;font-weight:bold">People</div>
<div style="position:absolute;left:13.8px;top:521.1px;width:19.8px;height:19.8px;border:2.2px solid #25659b;border-radius:3.2px"></div>
<div style="position:absolute;left:95.3px;top:519.5px;height:24px;line-height:24px;white-space:nowrap;color:#6b6b6b;letter-spacing:.1px">Name</div>
<svg class="ic " width="22" height="22" viewBox="0 0 24 24" style="position:absolute;left:144.3px;top:520.0px;"><path fill="#6b6b6b" d="M7,15L12,10L17,15H7Z"/></svg>
<div style="position:absolute;left:758.0px;top:519.5px;height:24px;line-height:24px;white-space:nowrap;color:#6b6b6b;letter-spacing:.2px">Size</div>
<div style="position:absolute;left:840.3px;top:519.5px;height:24px;line-height:24px;white-space:nowrap;color:#6b6b6b;letter-spacing:.2px">Modified</div>
<div style="position:absolute;left:0.0px;top:555.3px;width:966px;height:1px;background:#ededed"></div>
<div style="position:absolute;left:0.0px;top:603.1px;width:966px;height:1px;background:#ededed"></div>
<div style="position:absolute;left:13.8px;top:569.7px;width:19.8px;height:19.8px;border:2.2px solid #25659b;border-radius:3.2px"></div>
<svg class="ic " width="32.5" height="32.5" viewBox="0 0 24 24" style="position:absolute;left:45.1px;top:563.4px;"><path fill="#25659b" d="M10,4H4C2.89,4 2,4.89 2,6V18A2,2 0 0,0 4,20H20A2,2 0 0,0 22,18V8C22,6.89 21.1,6 20,6H12L10,4Z"/></svg><svg class="ic " width="16.7" height="16.7" viewBox="0 0 24 24" style="position:absolute;left:52.9px;top:572.5px;"><path fill="#fff" d="M15,14C12.33,14 7,15.33 7,18V20H23V18C23,15.33 17.67,14 15,14M6,10V7H4V10H1V12H4V15H6V12H9V10M15,12A4,4 0 0,0 19,8A4,4 0 0,0 15,4A4,4 0 0,0 11,8A4,4 0 0,0 15,12Z"/></svg>
<div style="position:absolute;left:94.4px;top:568.4px;height:24px;line-height:24px;white-space:nowrap;letter-spacing:0.05px">Assistant</div>
<svg class="ic " width="23.5" height="23.5" viewBox="0 0 24 24" style="position:absolute;left:420.5px;top:567.5px;"><path fill="#5bdc3a" d="M21,7L9,19L3.5,13.5L4.91,12.09L9,16.17L19.59,5.59L21,7Z"/></svg>
<div style="position:absolute;left:449.3px;top:568.2px;height:24px;line-height:24px;white-space:nowrap;letter-spacing:.1px">Approved</div>
<div style="position:absolute;left:545.2px;top:568.2px;height:24px;line-height:24px;white-space:nowrap;color:#25659b;letter-spacing:.08px">Shared</div>
<svg class="ic " width="22.4" height="22.4" viewBox="0 0 24 24" style="position:absolute;left:608.0px;top:567.9px;"><path fill="#25659b" d="M15,4A4,4 0 0,0 11,8A4,4 0 0,0 15,12A4,4 0 0,0 19,8A4,4 0 0,0 15,4M15,5.9C16.16,5.9 17.1,6.84 17.1,8C17.1,9.16 16.16,10.1 15,10.1A2.1,2.1 0 0,1 12.9,8A2.1,2.1 0 0,1 15,5.9M4,7V10H1V12H4V15H6V12H9V10H6V7H4M15,13C12.33,13 7,14.33 7,17V20H23V17C23,14.33 17.67,13 15,13M15,14.9C17.97,14.9 21.1,16.36 21.1,17V18.1H8.9V17C8.9,16.36 12,14.9 15,14.9Z"/></svg>
<svg class="ic " width="22.5" height="22.5" viewBox="0 0 24 24" style="position:absolute;left:657.0px;top:567.9px;"><path fill="#222" d="M16,12A2,2 0 0,1 18,10A2,2 0 0,1 20,12A2,2 0 0,1 18,14A2,2 0 0,1 16,12M10,12A2,2 0 0,1 12,10A2,2 0 0,1 14,12A2,2 0 0,1 12,14A2,2 0 0,1 10,12M4,12A2,2 0 0,1 6,10A2,2 0 0,1 8,12A2,2 0 0,1 6,14A2,2 0 0,1 4,12Z"/></svg>
<div style="position:absolute;left:698.8px;top:568.4px;width:100px;height:24px;line-height:24px;text-align:right;color:#222;white-space:nowrap">12.6 MB</div>
<div style="position:absolute;left:830.3px;top:568.4px;height:24px;line-height:24px;white-space:nowrap;color:#6e6e6e">September 15</div>
<div style="position:absolute;left:0.0px;top:651.4px;width:966px;height:1px;background:#ededed"></div>
<div style="position:absolute;left:13.8px;top:617.8px;width:19.8px;height:19.8px;border:2.2px solid #25659b;border-radius:3.2px"></div>
<svg class="ic " width="32.5" height="32.5" viewBox="0 0 24 24" style="position:absolute;left:45.1px;top:611.4px;"><path fill="#25659b" d="M10,4H4C2.89,4 2,4.89 2,6V18A2,2 0 0,0 4,20H20A2,2 0 0,0 22,18V8C22,6.89 21.1,6 20,6H12L10,4Z"/></svg>
<div style="position:absolute;left:94.4px;top:616.4px;height:24px;line-height:24px;white-space:nowrap;letter-spacing:0.3px">Autumn 25</div>
<svg class="ic " width="22.4" height="22.4" viewBox="0 0 24 24" style="position:absolute;left:607.0px;top:615.9px;"><path fill="#25659b" d="M15,4A4,4 0 0,0 11,8A4,4 0 0,0 15,12A4,4 0 0,0 19,8A4,4 0 0,0 15,4M15,5.9C16.16,5.9 17.1,6.84 17.1,8C17.1,9.16 16.16,10.1 15,10.1A2.1,2.1 0 0,1 12.9,8A2.1,2.1 0 0,1 15,5.9M4,7V10H1V12H4V15H6V12H9V10H6V7H4M15,13C12.33,13 7,14.33 7,17V20H23V17C23,14.33 17.67,13 15,13M15,14.9C17.97,14.9 21.1,16.36 21.1,17V18.1H8.9V17C8.9,16.36 12,14.9 15,14.9Z"/></svg>
<svg class="ic " width="22.5" height="22.5" viewBox="0 0 24 24" style="position:absolute;left:657.0px;top:615.9px;"><path fill="#222" d="M16,12A2,2 0 0,1 18,10A2,2 0 0,1 20,12A2,2 0 0,1 18,14A2,2 0 0,1 16,12M10,12A2,2 0 0,1 12,10A2,2 0 0,1 14,12A2,2 0 0,1 12,14A2,2 0 0,1 10,12M4,12A2,2 0 0,1 6,10A2,2 0 0,1 8,12A2,2 0 0,1 6,14A2,2 0 0,1 4,12Z"/></svg>
<div style="position:absolute;left:698.8px;top:616.4px;width:100px;height:24px;line-height:24px;text-align:right;color:#222;white-space:nowrap">46.5 MB</div>
<div style="position:absolute;left:830.3px;top:616.4px;height:24px;line-height:24px;white-space:nowrap;color:#7c7c7c">September 9</div>
<div style="position:absolute;left:0.0px;top:699.7px;width:966px;height:1px;background:#ededed"></div>
<div style="position:absolute;left:13.8px;top:666.0px;width:19.8px;height:19.8px;border:2.2px solid #25659b;border-radius:3.2px"></div>
<svg class="ic " width="32.5" height="32.5" viewBox="0 0 24 24" style="position:absolute;left:45.1px;top:659.7px;"><path fill="#25659b" d="M10,4H4C2.89,4 2,4.89 2,6V18A2,2 0 0,0 4,20H20A2,2 0 0,0 22,18V8C22,6.89 21.1,6 20,6H12L10,4Z"/></svg><svg class="ic " width="16.7" height="16.7" viewBox="0 0 24 24" style="position:absolute;left:52.9px;top:668.9px;"><path fill="#fff" d="M15,14C12.33,14 7,15.33 7,18V20H23V18C23,15.33 17.67,14 15,14M6,10V7H4V10H1V12H4V15H6V12H9V10M15,12A4,4 0 0,0 19,8A4,4 0 0,0 15,4A4,4 0 0,0 11,8A4,4 0 0,0 15,12Z"/></svg>
<div style="position:absolute;left:94.4px;top:664.7px;height:24px;line-height:24px;white-space:nowrap;letter-spacing:0.15px">Collectives</div>
<svg class="ic " width="21.5" height="21.5" viewBox="0 0 24 24" style="position:absolute;left:306.4px;top:664.9px;"><path fill="#222" d="M12,2A10,10 0 0,0 2,12A10,10 0 0,0 12,22A10,10 0 0,0 22,12A10,10 0 0,0 12,2M12,4A8,8 0 0,1 20,12A8,8 0 0,1 12,20A8,8 0 0,1 4,12A8,8 0 0,1 12,4M7.5,10.5A1.5,1.5 0 0,0 6,12A1.5,1.5 0 0,0 7.5,13.5A1.5,1.5 0 0,0 9,12A1.5,1.5 0 0,0 7.5,10.5M12,10.5A1.5,1.5 0 0,0 10.5,12A1.5,1.5 0 0,0 12,13.5A1.5,1.5 0 0,0 13.5,12A1.5,1.5 0 0,0 12,10.5M16.5,10.5A1.5,1.5 0 0,0 15,12A1.5,1.5 0 0,0 16.5,13.5A1.5,1.5 0 0,0 18,12A1.5,1.5 0 0,0 16.5,10.5Z"/></svg>
<div style="position:absolute;left:334.0px;top:664.5px;height:24px;line-height:24px;white-space:nowrap;letter-spacing:.17px">Waiting for your approval</div>
<div style="position:absolute;left:545.2px;top:664.5px;height:24px;line-height:24px;white-space:nowrap;color:#25659b;letter-spacing:.08px">Shared</div>
<svg class="ic " width="22.4" height="22.4" viewBox="0 0 24 24" style="position:absolute;left:608.0px;top:664.2px;"><path fill="#25659b" d="M12,5A3.5,3.5 0 0,0 8.5,8.5A3.5,3.5 0 0,0 12,12A3.5,3.5 0 0,0 15.5,8.5A3.5,3.5 0 0,0 12,5M12,7A1.5,1.5 0 0,1 13.5,8.5A1.5,1.5 0 0,1 12,10A1.5,1.5 0 0,1 10.5,8.5A1.5,1.5 0 0,1 12,7M5.5,8A2.5,2.5 0 0,0 3,10.5C3,11.44 3.53,12.25 4.29,12.68C4.65,12.88 5.06,13 5.5,13C5.94,13 6.35,12.88 6.71,12.68C7.08,12.47 7.39,12.17 7.62,11.81C6.89,10.86 6.5,9.7 6.5,8.5C6.5,8.41 6.5,8.31 6.5,8.22C6.2,8.08 5.86,8 5.5,8M18.5,8C18.14,8 17.8,8.08 17.5,8.22C17.5,8.31 17.5,8.41 17.5,8.5C17.5,9.7 17.11,10.86 16.38,11.81C16.5,12 16.63,12.15 16.78,12.3C16.94,12.45 17.1,12.58 17.29,12.68C17.65,12.88 18.06,13 18.5,13C18.94,13 19.35,12.88 19.71,12.68C20.47,12.25 21,11.44 21,10.5A2.5,2.5 0 0,0 18.5,8M12,14C9.66,14 5,15.17 5,17.5V19H19V17.5C19,15.17 14.34,14 12,14M4.71,14.55C2.78,14.78 0,15.76 0,17.5V19H3V17.07C3,16.06 3.69,15.22 4.71,14.55M19.29,14.55C20.31,15.22 21,16.06 21,17.07V19H24V17.5C24,15.76 21.22,14.78 19.29,14.55M12,16C13.53,16 15.24,16.5 16.23,17H7.77C8.76,16.5 10.47,16 12,16Z"/></svg>
<svg class="ic " width="22.5" height="22.5" viewBox="0 0 24 24" style="position:absolute;left:657.0px;top:664.2px;"><path fill="#222" d="M16,12A2,2 0 0,1 18,10A2,2 0 0,1 20,12A2,2 0 0,1 18,14A2,2 0 0,1 16,12M10,12A2,2 0 0,1 12,10A2,2 0 0,1 14,12A2,2 0 0,1 12,14A2,2 0 0,1 10,12M4,12A2,2 0 0,1 6,10A2,2 0 0,1 8,12A2,2 0 0,1 6,14A2,2 0 0,1 4,12Z"/></svg>
<div style="position:absolute;left:698.8px;top:664.7px;width:100px;height:24px;line-height:24px;text-align:right;color:#222;white-space:nowrap">51.5 MB</div>
<div style="position:absolute;left:830.3px;top:664.7px;height:24px;line-height:24px;white-space:nowrap;color:#333">2 weeks ago</div>
<div style="position:absolute;left:0.0px;top:700.2px;width:966px;height:48.299999999999955px;background:#f5f5f5"></div>
<div style="position:absolute;left:0.0px;top:748.0px;width:966px;height:1px;background:#ededed"></div>
<div style="position:absolute;left:13.8px;top:714.4px;width:19.8px;height:19.8px;border:2.2px solid #25659b;border-radius:3.2px"></div>
<svg class="ic " width="32.5" height="32.5" viewBox="0 0 24 24" style="position:absolute;left:45.1px;top:708.0px;"><path fill="#25659b" d="M10,4H4C2.89,4 2,4.89 2,6V18A2,2 0 0,0 4,20H20A2,2 0 0,0 22,18V8C22,6.89 21.1,6 20,6H12L10,4Z"/></svg><svg class="ic " width="16.7" height="16.7" viewBox="0 0 24 24" style="position:absolute;left:52.9px;top:717.2px;"><path fill="#fff" d="M12,5.5A3.5,3.5 0 0,1 15.5,9A3.5,3.5 0 0,1 12,12.5A3.5,3.5 0 0,1 8.5,9A3.5,3.5 0 0,1 12,5.5M5,8C5.56,8 6.08,8.15 6.53,8.42C6.38,9.85 6.8,11.27 7.66,12.38C7.16,13.34 6.16,14 5,14A3,3 0 0,1 2,11A3,3 0 0,1 5,8M19,8A3,3 0 0,1 22,11A3,3 0 0,1 19,14C17.84,14 16.84,13.34 16.34,12.38C17.2,11.27 17.62,9.85 17.47,8.42C17.92,8.15 18.44,8 19,8M5.5,18.25C5.5,16.18 8.41,14.5 12,14.5C15.59,14.5 18.5,16.18 18.5,18.25V20H5.5V18.25M0,20V18.5C0,17.11 1.89,15.94 4.45,15.6C3.86,16.28 3.5,17.22 3.5,18.25V20H0M24,20H20.5V18.25C20.5,17.22 20.14,16.28 19.55,15.6C22.11,15.94 24,17.11 24,18.5V20Z"/></svg>
<div style="position:absolute;left:94.4px;top:713.0px;height:24px;line-height:24px;white-space:nowrap;letter-spacing:0.21px">Energy-saving initiative</div>
<svg class="ic " width="22.4" height="22.4" viewBox="0 0 24 24" style="position:absolute;left:607.0px;top:712.5px;"><path fill="#25659b" d="M15,4A4,4 0 0,0 11,8A4,4 0 0,0 15,12A4,4 0 0,0 19,8A4,4 0 0,0 15,4M15,5.9C16.16,5.9 17.1,6.84 17.1,8C17.1,9.16 16.16,10.1 15,10.1A2.1,2.1 0 0,1 12.9,8A2.1,2.1 0 0,1 15,5.9M4,7V10H1V12H4V15H6V12H9V10H6V7H4M15,13C12.33,13 7,14.33 7,17V20H23V17C23,14.33 17.67,13 15,13M15,14.9C17.97,14.9 21.1,16.36 21.1,17V18.1H8.9V17C8.9,16.36 12,14.9 15,14.9Z"/></svg>
<svg class="ic " width="22.5" height="22.5" viewBox="0 0 24 24" style="position:absolute;left:657.0px;top:712.5px;"><path fill="#222" d="M16,12A2,2 0 0,1 18,10A2,2 0 0,1 20,12A2,2 0 0,1 18,14A2,2 0 0,1 16,12M10,12A2,2 0 0,1 12,10A2,2 0 0,1 14,12A2,2 0 0,1 12,14A2,2 0 0,1 10,12M4,12A2,2 0 0,1 6,10A2,2 0 0,1 8,12A2,2 0 0,1 6,14A2,2 0 0,1 4,12Z"/></svg>
<div style="position:absolute;left:698.8px;top:713.0px;width:100px;height:24px;line-height:24px;text-align:right;color:#2e2e2e;white-space:nowrap">1.6 MB</div>
<div style="position:absolute;left:830.3px;top:713.0px;height:24px;line-height:24px;white-space:nowrap;color:#222">September 9</div>
<div style="position:absolute;left:0.0px;top:796.3px;width:966px;height:1px;background:#ededed"></div>
<div style="position:absolute;left:13.8px;top:762.6px;width:19.8px;height:19.8px;border:2.2px solid #25659b;border-radius:3.2px"></div>
<svg class="ic " width="32.5" height="32.5" viewBox="0 0 24 24" style="position:absolute;left:45.1px;top:756.3px;"><path fill="#25659b" d="M10,4H4C2.89,4 2,4.89 2,6V18A2,2 0 0,0 4,20H20A2,2 0 0,0 22,18V8C22,6.89 21.1,6 20,6H12L10,4Z"/></svg><svg class="ic " width="16.7" height="16.7" viewBox="0 0 24 24" style="position:absolute;left:52.9px;top:765.5px;"><path fill="#fff" d="M12,5.5A3.5,3.5 0 0,1 15.5,9A3.5,3.5 0 0,1 12,12.5A3.5,3.5 0 0,1 8.5,9A3.5,3.5 0 0,1 12,5.5M5,8C5.56,8 6.08,8.15 6.53,8.42C6.38,9.85 6.8,11.27 7.66,12.38C7.16,13.34 6.16,14 5,14A3,3 0 0,1 2,11A3,3 0 0,1 5,8M19,8A3,3 0 0,1 22,11A3,3 0 0,1 19,14C17.84,14 16.84,13.34 16.34,12.38C17.2,11.27 17.62,9.85 17.47,8.42C17.92,8.15 18.44,8 19,8M5.5,18.25C5.5,16.18 8.41,14.5 12,14.5C15.59,14.5 18.5,16.18 18.5,18.25V20H5.5V18.25M0,20V18.5C0,17.11 1.89,15.94 4.45,15.6C3.86,16.28 3.5,17.22 3.5,18.25V20H0M24,20H20.5V18.25C20.5,17.22 20.14,16.28 19.55,15.6C22.11,15.94 24,17.11 24,18.5V20Z"/></svg>
<div style="position:absolute;left:94.4px;top:761.3px;height:24px;line-height:24px;white-space:nowrap;letter-spacing:-0.1px">Event Flyers</div>
<svg class="ic " width="22.4" height="22.4" viewBox="0 0 24 24" style="position:absolute;left:607.0px;top:760.8px;"><path fill="#25659b" d="M15,4A4,4 0 0,0 11,8A4,4 0 0,0 15,12A4,4 0 0,0 19,8A4,4 0 0,0 15,4M15,5.9C16.16,5.9 17.1,6.84 17.1,8C17.1,9.16 16.16,10.1 15,10.1A2.1,2.1 0 0,1 12.9,8A2.1,2.1 0 0,1 15,5.9M4,7V10H1V12H4V15H6V12H9V10H6V7H4M15,13C12.33,13 7,14.33 7,17V20H23V17C23,14.33 17.67,13 15,13M15,14.9C17.97,14.9 21.1,16.36 21.1,17V18.1H8.9V17C8.9,16.36 12,14.9 15,14.9Z"/></svg>
<svg class="ic " width="21.3" height="21.3" viewBox="0 0 24 24" style="position:absolute;left:564.5px;top:761.8px;"><path fill="#222" d="M9,22A1,1 0 0,1 8,21V18H4A2,2 0 0,1 2,16V4C2,2.89 2.9,2 4,2H20A2,2 0 0,1 22,4V16A2,2 0 0,1 20,18H13.9L10.2,21.71C10,21.9 9.75,22 9.5,22V22H9M17,11V9H15V11H17M13,11V9H11V11H13M9,11V9H7V11H9Z"/></svg>
<svg class="ic " width="22.5" height="22.5" viewBox="0 0 24 24" style="position:absolute;left:657.0px;top:760.8px;"><path fill="#222" d="M16,12A2,2 0 0,1 18,10A2,2 0 0,1 20,12A2,2 0 0,1 18,14A2,2 0 0,1 16,12M10,12A2,2 0 0,1 12,10A2,2 0 0,1 14,12A2,2 0 0,1 12,14A2,2 0 0,1 10,12M4,12A2,2 0 0,1 6,10A2,2 0 0,1 8,12A2,2 0 0,1 6,14A2,2 0 0,1 4,12Z"/></svg>
<div style="position:absolute;left:698.8px;top:761.3px;width:100px;height:24px;line-height:24px;text-align:right;color:#444;white-space:nowrap">7.1 MB</div>
<div style="position:absolute;left:830.3px;top:761.3px;height:24px;line-height:24px;white-space:nowrap;color:#7c7c7c">September 9</div>
<div style="position:absolute;left:0.0px;top:844.6px;width:966px;height:1px;background:#ededed"></div>
<div style="position:absolute;left:13.8px;top:811.0px;width:19.8px;height:19.8px;border:2.2px solid #25659b;border-radius:3.2px"></div>
<svg class="ic " width="32.5" height="32.5" viewBox="0 0 24 24" style="position:absolute;left:45.1px;top:804.6px;"><path fill="#25659b" d="M10,4H4C2.89,4 2,4.89 2,6V18A2,2 0 0,0 4,20H20A2,2 0 0,0 22,18V8C22,6.89 21.1,6 20,6H12L10,4Z"/></svg>
<div style="position:absolute;left:94.4px;top:809.6px;height:24px;line-height:24px;white-space:nowrap;letter-spacing:-0.08px">Expenses</div>
<svg class="ic " width="22.4" height="22.4" viewBox="0 0 24 24" style="position:absolute;left:607.0px;top:809.1px;"><path fill="#25659b" d="M15,4A4,4 0 0,0 11,8A4,4 0 0,0 15,12A4,4 0 0,0 19,8A4,4 0 0,0 15,4M15,5.9C16.16,5.9 17.1,6.84 17.1,8C17.1,9.16 16.16,10.1 15,10.1A2.1,2.1 0 0,1 12.9,8A2.1,2.1 0 0,1 15,5.9M4,7V10H1V12H4V15H6V12H9V10H6V7H4M15,13C12.33,13 7,14.33 7,17V20H23V17C23,14.33 17.67,13 15,13M15,14.9C17.97,14.9 21.1,16.36 21.1,17V18.1H8.9V17C8.9,16.36 12,14.9 15,14.9Z"/></svg>
<svg class="ic " width="22.5" height="22.5" viewBox="0 0 24 24" style="position:absolute;left:657.0px;top:809.1px;"><path fill="#222" d="M16,12A2,2 0 0,1 18,10A2,2 0 0,1 20,12A2,2 0 0,1 18,14A2,2 0 0,1 16,12M10,12A2,2 0 0,1 12,10A2,2 0 0,1 14,12A2,2 0 0,1 12,14A2,2 0 0,1 10,12M4,12A2,2 0 0,1 6,10A2,2 0 0,1 8,12A2,2 0 0,1 6,14A2,2 0 0,1 4,12Z"/></svg>
<div style="position:absolute;left:698.8px;top:809.6px;width:100px;height:24px;line-height:24px;text-align:right;color:#737373;white-space:nowrap">2 KB</div>
<div style="position:absolute;left:830.3px;top:809.6px;height:24px;line-height:24px;white-space:nowrap;color:#858585">September 5</div>
<div style="position:absolute;left:0.0px;top:892.9px;width:966px;height:1px;background:#ededed"></div>
<div style="position:absolute;left:13.8px;top:859.2px;width:19.8px;height:19.8px;border:2.2px solid #25659b;border-radius:3.2px"></div>
<svg class="ic " width="32.5" height="32.5" viewBox="0 0 24 24" style="position:absolute;left:45.1px;top:852.9px;"><path fill="#25659b" d="M10,4H4C2.89,4 2,4.89 2,6V18A2,2 0 0,0 4,20H20A2,2 0 0,0 22,18V8C22,6.89 21.1,6 20,6H12L10,4Z"/></svg>
<div style="position:absolute;left:94.4px;top:857.9px;height:24px;line-height:24px;white-space:nowrap;letter-spacing:-0.8px">HR</div>
<svg class="ic " width="22.4" height="22.4" viewBox="0 0 24 24" style="position:absolute;left:607.0px;top:857.4px;"><path fill="#25659b" d="M15,4A4,4 0 0,0 11,8A4,4 0 0,0 15,12A4,4 0 0,0 19,8A4,4 0 0,0 15,4M15,5.9C16.16,5.9 17.1,6.84 17.1,8C17.1,9.16 16.16,10.1 15,10.1A2.1,2.1 0 0,1 12.9,8A2.1,2.1 0 0,1 15,5.9M4,7V10H1V12H4V15H6V12H9V10H6V7H4M15,13C12.33,13 7,14.33 7,17V20H23V17C23,14.33 17.67,13 15,13M15,14.9C17.97,14.9 21.1,16.36 21.1,17V18.1H8.9V17C8.9,16.36 12,14.9 15,14.9Z"/></svg>
<svg class="ic " width="22.5" height="22.5" viewBox="0 0 24 24" style="position:absolute;left:657.0px;top:857.4px;"><path fill="#222" d="M16,12A2,2 0 0,1 18,10A2,2 0 0,1 20,12A2,2 0 0,1 18,14A2,2 0 0,1 16,12M10,12A2,2 0 0,1 12,10A2,2 0 0,1 14,12A2,2 0 0,1 12,14A2,2 0 0,1 10,12M4,12A2,2 0 0,1 6,10A2,2 0 0,1 8,12A2,2 0 0,1 6,14A2,2 0 0,1 4,12Z"/></svg>
<div style="position:absolute;left:698.8px;top:857.9px;width:100px;height:24px;line-height:24px;text-align:right;color:#737373;white-space:nowrap">13 KB</div>
<div style="position:absolute;left:830.3px;top:857.9px;height:24px;line-height:24px;white-space:nowrap;color:#858585">September 5</div>
<div style="position:absolute;left:0.0px;top:941.2px;width:966px;height:1px;background:#ededed"></div>
<div style="position:absolute;left:13.8px;top:907.5px;width:19.8px;height:19.8px;border:2.2px solid #25659b;border-radius:3.2px"></div>
<svg class="ic " width="32.5" height="32.5" viewBox="0 0 24 24" style="position:absolute;left:45.1px;top:901.2px;"><path fill="#25659b" d="M10,4H4C2.89,4 2,4.89 2,6V18A2,2 0 0,0 4,20H20A2,2 0 0,0 22,18V8C22,6.89 21.1,6 20,6H12L10,4Z"/></svg>
<div style="position:absolute;left:94.4px;top:906.2px;height:24px;line-height:24px;white-space:nowrap;letter-spacing:0.05px">macOS File Provider Lock Types</div>
<svg class="ic " width="22.4" height="22.4" viewBox="0 0 24 24" style="position:absolute;left:607.0px;top:905.7px;"><path fill="#25659b" d="M15,4A4,4 0 0,0 11,8A4,4 0 0,0 15,12A4,4 0 0,0 19,8A4,4 0 0,0 15,4M15,5.9C16.16,5.9 17.1,6.84 17.1,8C17.1,9.16 16.16,10.1 15,10.1A2.1,2.1 0 0,1 12.9,8A2.1,2.1 0 0,1 15,5.9M4,7V10H1V12H4V15H6V12H9V10H6V7H4M15,13C12.33,13 7,14.33 7,17V20H23V17C23,14.33 17.67,13 15,13M15,14.9C17.97,14.9 21.1,16.36 21.1,17V18.1H8.9V17C8.9,16.36 12,14.9 15,14.9Z"/></svg>
<svg class="ic " width="22.5" height="22.5" viewBox="0 0 24 24" style="position:absolute;left:657.0px;top:905.7px;"><path fill="#222" d="M16,12A2,2 0 0,1 18,10A2,2 0 0,1 20,12A2,2 0 0,1 18,14A2,2 0 0,1 16,12M10,12A2,2 0 0,1 12,10A2,2 0 0,1 14,12A2,2 0 0,1 12,14A2,2 0 0,1 10,12M4,12A2,2 0 0,1 6,10A2,2 0 0,1 8,12A2,2 0 0,1 6,14A2,2 0 0,1 4,12Z"/></svg>
<div style="position:absolute;left:698.8px;top:906.2px;width:100px;height:24px;line-height:24px;text-align:right;color:#737373;white-space:nowrap">0 KB</div>
<div style="position:absolute;left:830.3px;top:906.2px;height:24px;line-height:24px;white-space:nowrap;color:#333">2 weeks ago</div>
</div>
<div id="aside">
<div style="position:absolute;left:9.6px;top:14.2px;height:30px;line-height:30px;white-space:nowrap;font-weight:bold;font-size:21.5px;letter-spacing:-.22px">Energy-saving initiative</div>
<svg class="ic " width="22" height="22" viewBox="0 0 24 24" style="position:absolute;left:409.4px;top:16.3px;"><path fill="#222" d="M16,12A2,2 0 0,1 18,10A2,2 0 0,1 20,12A2,2 0 0,1 18,14A2,2 0 0,1 16,12M10,12A2,2 0 0,1 12,10A2,2 0 0,1 14,12A2,2 0 0,1 12,14A2,2 0 0,1 10,12M4,12A2,2 0 0,1 6,10A2,2 0 0,1 8,12A2,2 0 0,1 6,14A2,2 0 0,1 4,12Z"/></svg>
<svg class="ic " width="22" height="22" viewBox="0 0 24 24" style="position:absolute;left:446.0px;top:16.5px;"><path fill="#222" d="M19,6.41L17.59,5L12,10.59L6.41,5L5,6.41L10.59,12L5,17.59L6.41,19L12,13.41L17.59,19L19,17.59L13.41,12L19,6.41Z"/></svg>
<div style="position:absolute;left:10.0px;top:47.1px;height:24px;line-height:24px;white-space:nowrap;color:#6b6b6b;letter-spacing:-.45px">1.6 MB</div>
<div style="position:absolute;left:68.2px;top:47.5px;height:24px;line-height:24px;white-space:nowrap;color:#6b6b6b;font-size:17px">•</div>
<div style="position:absolute;left:85.0px;top:47.1px;height:24px;line-height:24px;white-space:nowrap;color:#6b6b6b;letter-spacing:.25px">September 9</div>
<div style="position:absolute;left:191.2px;top:47.5px;height:24px;line-height:24px;white-space:nowrap;color:#6b6b6b;font-size:17px">•</div>
<div style="position:absolute;left:208.0px;top:47.1px;height:24px;line-height:24px;white-space:nowrap;color:#6b6b6b;letter-spacing:.1px">Owner</div>
<div style="position:absolute;left:266.0px;top:47.8px;width:135.5px;height:21.8px;background:#f0f0f0;border-radius:11px"></div>
<div style="position:absolute;left:268.0px;top:49.7px;width:18px;height:18px;border-radius:50%;background:radial-gradient(circle at 50% 45%,#c9a58a 0 22%,rgba(0,0,0,0) 24%),linear-gradient(#8a8f55 0 45%,#a9bfd6 46% 100%);overflow:hidden"></div>
<div style="position:absolute;left:290.7px;top:47.1px;height:24px;line-height:24px;white-space:nowrap;color:#6b6b6b;letter-spacing:-.1px">Christine (Y…</div>
<svg class="ic " width="22" height="22" viewBox="0 0 24 24" style="position:absolute;left:76.0px;top:95.0px;"><path fill="#222" d="M11,15H6L13,1V9H18L11,23V15Z"/></svg>
<div style="position:absolute;left:9.0px;top:124.0px;width:156px;height:24px;line-height:24px;text-align:center;letter-spacing:.1px">Activity</div>
<svg class="ic " width="22" height="22" viewBox="0 0 24 24" style="position:absolute;left:232.0px;top:95.0px;"><path stroke="#222" stroke-width=".7" fill="#222" d="M21,7L9,19L3.5,13.5L4.91,12.09L9,16.17L19.59,5.59L21,7Z"/></svg>
<div style="position:absolute;left:165.0px;top:124.0px;width:156px;height:24px;line-height:24px;text-align:center;letter-spacing:.1px">Approval</div>
<svg class="ic " width="22" height="22" viewBox="0 0 24 24" style="position:absolute;left:387.7px;top:95.0px;"><path fill="#222" d="M18,16.08C17.24,16.08 16.56,16.38 16.04,16.85L8.91,12.7C8.96,12.47 9,12.24 9,12C9,11.76 8.96,11.53 8.91,11.3L15.96,7.19C16.5,7.69 17.21,8 18,8A3,3 0 0,0 21,5A3,3 0 0,0 18,2A3,3 0 0,0 15,5C15,5.24 15.04,5.47 15.09,5.7L8.04,9.81C7.5,9.31 6.79,9 6,9A3,3 0 0,0 3,12A3,3 0 0,0 6,15C6.79,15 7.5,14.69 8.04,14.19L15.16,18.34C15.11,18.55 15.08,18.77 15.08,19C15.08,20.61 16.39,21.91 18,21.91C19.61,21.91 20.92,20.61 20.92,19A2.92,2.92 0 0,0 18,16.08Z"/></svg>
<div style="position:absolute;left:320.7px;top:124.0px;width:156px;height:24px;line-height:24px;text-align:center;font-weight:bold;letter-spacing:.1px">Sharing</div>
<div style="position:absolute;left:9.0px;top:155.8px;width:467.5px;height:1.2px;background:#ededed"></div>
<div style="position:absolute;left:320.4px;top:152.2px;width:156.1px;height:4.1px;background:#25659b"></div>
<div style="position:absolute;left:481.2px;top:157.8px;width:4px;height:629px;background:#808080"></div>
<div style="position:absolute;left:18.8px;top:178.0px;height:24px;line-height:24px;white-space:nowrap;font-weight:bold;font-size:17.6px;letter-spacing:-.15px">Internal shares</div>
<svg class="ic " width="22" height="22" viewBox="0 0 24 24" style="position:absolute;left:149.7px;top:179.0px;"><path fill="#25659b" d="M11,9H13V7H11M12,20C7.59,20 4,16.41 4,12C4,7.59 7.59,4 12,4C16.41,4 20,7.59 20,12C20,16.41 16.41,20 12,20M12,2A10,10 0 0,0 2,12A10,10 0 0,0 12,22A10,10 0 0,0 22,12A10,10 0 0,0 12,2M11,17H13V11H11V17Z"/></svg>
<div style="position:absolute;left:18.0px;top:215.3px;width:450px;height:36.6px;border:1.1px solid #6b6b6b;border-radius:8px"></div>
<div style="position:absolute;left:33.0px;top:222.3px;height:24px;line-height:24px;white-space:nowrap;color:#6b6b6b;letter-spacing:.2px">Type names or teams</div>
<svg class="ic " width="26" height="26" viewBox="0 0 24 24" style="position:absolute;left:430.4px;top:221.0px;"><path fill="#222" d="M7.41,8.58L12,13.17L16.59,8.58L18,10L12,16L6,10L7.41,8.58Z"/></svg>
<div style="position:absolute;left:18.0px;top:267.8px;width:35px;height:35px;border-radius:50%;background:#f3e9f5;color:#a35bb5;text-align:center;line-height:36px;font-size:13.6px;letter-spacing:.3px">EI</div>
<div style="position:absolute;left:64.8px;top:257.8px;height:24px;line-height:24px;white-space:nowrap;letter-spacing:.2px">Energy-saving initiative (conversation)</div>
<div style="position:absolute;left:69.8px;top:283.0px;height:24px;line-height:24px;white-space:nowrap;color:#25659b;font-size:14.4px;letter-spacing:0">Can edit</div>
<svg style="position:absolute;left:133.6px;top:292.9px;" width="6" height="6" viewBox="0 0 6 6"><path d="M.2.4H5.8L3 5.6Z" fill="#25659b"/></svg>
<svg class="ic " width="22" height="22" viewBox="0 0 24 24" style="position:absolute;left:438.0px;top:274.2px;"><path fill="#222" d="M16,12A2,2 0 0,1 18,10A2,2 0 0,1 20,12A2,2 0 0,1 18,14A2,2 0 0,1 16,12M10,12A2,2 0 0,1 12,10A2,2 0 0,1 14,12A2,2 0 0,1 12,14A2,2 0 0,1 10,12M4,12A2,2 0 0,1 6,10A2,2 0 0,1 8,12A2,2 0 0,1 6,14A2,2 0 0,1 4,12Z"/></svg>
<div style="position:absolute;left:18.0px;top:315.8px;width:35px;height:35px;border-radius:50%;border:1.5px solid #fafafa"></div>
<div style="position:absolute;left:64.8px;top:306.3px;height:24px;line-height:24px;white-space:nowrap;letter-spacing:.2px">Energy-saving initiative (Team owned by Jos)</div>
<div style="position:absolute;left:69.8px;top:331.3px;height:24px;line-height:24px;white-space:nowrap;color:#25659b;font-size:14.4px;letter-spacing:0">Can edit</div>
<svg style="position:absolute;left:133.6px;top:341.2px;" width="6" height="6" viewBox="0 0 6 6"><path d="M.2.4H5.8L3 5.6Z" fill="#25659b"/></svg>
<svg class="ic " width="22" height="22" viewBox="0 0 24 24" style="position:absolute;left:438.0px;top:322.5px;"><path fill="#222" d="M16,12A2,2 0 0,1 18,10A2,2 0 0,1 20,12A2,2 0 0,1 18,14A2,2 0 0,1 16,12M10,12A2,2 0 0,1 12,10A2,2 0 0,1 14,12A2,2 0 0,1 12,14A2,2 0 0,1 10,12M4,12A2,2 0 0,1 6,10A2,2 0 0,1 8,12A2,2 0 0,1 6,14A2,2 0 0,1 4,12Z"/></svg>
<div style="position:absolute;left:18.0px;top:364.2px;width:35px;height:35px;border-radius:50%;background:#6b6b6b"></div>
<svg class="ic " width="22" height="22" viewBox="0 0 24 24" style="position:absolute;left:24.5px;top:370.7px;"><path fill="#fff" d="M16,12A2,2 0 0,1 18,10A2,2 0 0,1 20,12A2,2 0 0,1 18,14A2,2 0 0,1 16,12M10,12A2,2 0 0,1 12,10A2,2 0 0,1 14,12A2,2 0 0,1 12,14A2,2 0 0,1 10,12M4,12A2,2 0 0,1 6,10A2,2 0 0,1 8,12A2,2 0 0,1 6,14A2,2 0 0,1 4,12Z"/></svg>
<div style="position:absolute;left:64.8px;top:369.6px;height:24px;line-height:24px;white-space:nowrap;letter-spacing:.15px">Others with access</div>
<svg class="ic " width="22" height="22" viewBox="0 0 24 24" style="position:absolute;left:438.0px;top:370.5px;"><path fill="#222" d="M7,10L12,15L17,10H7Z"/></svg>
<div style="position:absolute;left:18.0px;top:417.0px;width:35px;height:35px;border-radius:50%;background:#6b6b6b"></div>
<svg class="ic " width="20" height="20" viewBox="0 0 24 24" style="position:absolute;left:25.5px;top:424.5px;"><path fill="#fff" d="M14,3V5H17.59L7.76,14.83L9.17,16.24L19,6.41V10H21V3M19,19H5V5H12V3H5C3.89,3 3,3.9 3,5V19A2,2 0 0,0 5,21H19A2,2 0 0,0 21,19V12H19V19Z"/></svg>
<div style="position:absolute;left:64.8px;top:412.8px;height:24px;line-height:24px;white-space:nowrap;letter-spacing:.2px">Internal link</div>
<div style="position:absolute;left:64.8px;top:432.8px;height:24px;line-height:24px;white-space:nowrap;color:#6b6b6b;letter-spacing:.07px">For people who already have access</div>
<svg class="ic " width="22" height="22" viewBox="0 0 24 24" style="position:absolute;left:438.0px;top:423.5px;"><path fill="#222" d="M19,21H8V7H19M19,5H8A2,2 0 0,0 6,7V21A2,2 0 0,0 8,23H19A2,2 0 0,0 21,21V7A2,2 0 0,0 19,5M16,1H4A2,2 0 0,0 2,3V17H4V3H16V1Z"/></svg>
<div style="position:absolute;left:18.0px;top:481.2px;width:450px;height:1.6px;background:#ededed"></div>
<div style="position:absolute;left:18.8px;top:492.0px;height:24px;line-height:24px;white-space:nowrap;font-weight:bold;font-size:17.6px;letter-spacing:-.15px">External shares</div>
<svg class="ic " width="22" height="22" viewBox="0 0 24 24" style="position:absolute;left:154.4px;top:493.0px;"><path fill="#25659b" d="M11,9H13V7H11M12,20C7.59,20 4,16.41 4,12C4,7.59 7.59,4 12,4C16.41,4 20,7.59 20,12C20,16.41 16.41,20 12,20M12,2A10,10 0 0,0 2,12A10,10 0 0,0 12,22A10,10 0 0,0 22,12A10,10 0 0,0 12,2M11,17H13V11H11V17Z"/></svg>
<div style="position:absolute;left:18.0px;top:529.4px;width:450px;height:36.6px;border:1.1px solid #6b6b6b;border-radius:8px"></div>
<div style="position:absolute;left:33.0px;top:536.3px;height:24px;line-height:24px;white-space:nowrap;color:#6b6b6b;letter-spacing:.13px">Type an email or federated cloud ID</div>
<svg class="ic " width="26" height="26" viewBox="0 0 24 24" style="position:absolute;left:430.4px;top:535.0px;"><path fill="#222" d="M7.41,8.58L12,13.17L16.59,8.58L18,10L12,16L6,10L7.41,8.58Z"/></svg>
<div style="position:absolute;left:18.0px;top:581.7px;width:35px;height:35px;border-radius:50%;background:#25659b"></div>
<svg class="ic " width="20" height="20" viewBox="0 0 24 24" style="position:absolute;left:25.5px;top:589.2px;"><path fill="#fff" d="M3.9,12C3.9,10.29 5.29,8.9 7,8.9H11V7H7A5,5 0 0,0 2,12A5,5 0 0,0 7,17H11V15.1H7C5.29,15.1 3.9,13.71 3.9,12M8,13H16V11H8V13M17,7H13V8.9H17C18.71,8.9 20.1,10.29 20.1,12C20.1,13.71 18.71,15.1 17,15.1H13V17H17A5,5 0 0,0 22,12A5,5 0 0,0 17,7Z"/></svg>
<div style="position:absolute;left:64.8px;top:587.1px;height:24px;line-height:24px;white-space:nowrap;letter-spacing:.2px">Create public link</div>
<svg class="ic " width="22" height="22" viewBox="0 0 24 24" style="position:absolute;left:438.0px;top:588.2px;"><path fill="#222" d="M19,13H13V19H11V13H5V11H11V5H13V11H19V13Z"/></svg>
<div style="position:absolute;left:18.0px;top:641.4px;width:450px;height:1.6px;background:#ededed"></div>
<div style="position:absolute;left:18.8px;top:652.7px;height:24px;line-height:24px;white-space:nowrap;font-weight:bold;font-size:17.6px;letter-spacing:-.15px">Additional shares</div>
<svg class="ic " width="22" height="22" viewBox="0 0 24 24" style="position:absolute;left:170.0px;top:653.7px;"><path fill="#25659b" d="M11,9H13V7H11M12,20C7.59,20 4,16.41 4,12C4,7.59 7.59,4 12,4C16.41,4 20,7.59 20,12C20,16.41 16.41,20 12,20M12,2A10,10 0 0,0 2,12A10,10 0 0,0 12,22A10,10 0 0,0 22,12A10,10 0 0,0 12,2M11,17H13V11H11V17Z"/></svg>
<div style="position:absolute;left:18.8px;top:725.5px;height:30px;line-height:30px;white-space:nowrap;font-weight:bold;font-size:21px;letter-spacing:-.27px">Related team resources</div>
<div style="position:absolute;left:18.4px;top:762.5px;width:449px;height:180px;border:2.2px solid #dcdcdc;border-radius:28px"></div>
<svg class="ic " width="22" height="22" viewBox="0 0 24 24" style="position:absolute;left:39.7px;top:782.5px;"><path fill="#222" d="M12,5.5A3.5,3.5 0 0,1 15.5,9A3.5,3.5 0 0,1 12,12.5A3.5,3.5 0 0,1 8.5,9A3.5,3.5 0 0,1 12,5.5M5,8C5.56,8 6.08,8.15 6.53,8.42C6.38,9.85 6.8,11.27 7.66,12.38C7.16,13.34 6.16,14 5,14A3,3 0 0,1 2,11A3,3 0 0,1 5,8M19,8A3,3 0 0,1 22,11A3,3 0 0,1 19,14C17.84,14 16.84,13.34 16.34,12.38C17.2,11.27 17.62,9.85 17.47,8.42C17.92,8.15 18.44,8 19,8M5.5,18.25C5.5,16.18 8.41,14.5 12,14.5C15.59,14.5 18.5,16.18 18.5,18.25V20H5.5V18.25M0,20V18.5C0,17.11 1.89,15.94 4.45,15.6C3.86,16.28 3.5,17.22 3.5,18.25V20H0M24,20H20.5V18.25C20.5,17.22 20.14,16.28 19.55,15.6C22.11,15.94 24,17.11 24,18.5V20Z"/></svg>
<div style="position:absolute;left:76.0px;top:778.6px;height:30px;line-height:30px;white-space:nowrap;font-weight:bold;font-size:21px;letter-spacing:-.27px">Energy-saving initiative</div>
<svg class="ic " width="22" height="22" viewBox="0 0 24 24" style="position:absolute;left:374.0px;top:782.0px;"><path fill="#222" d="M14,3V5H17.59L7.76,14.83L9.17,16.24L19,6.41V10H21V3M19,19H5V5H12V3H5C3.89,3 3,3.9 3,5V19A2,2 0 0,0 5,21H19A2,2 0 0,0 21,19V12H19V19Z"/></svg>
<svg class="ic " width="22" height="22" viewBox="0 0 24 24" style="position:absolute;left:417.0px;top:782.0px;"><path fill="#222" d="M7.41,15.41L12,10.83L16.59,15.41L18,14L12,8L6,14L7.41,15.41Z"/></svg>
<div style="position:absolute;left:34.3px;top:857.0px;height:24px;line-height:24px;white-space:nowrap;font-weight:bold;font-size:18px;letter-spacing:-.1px">Deck</div>
<div style="position:absolute;left:42.0px;top:903.9px;width:19.4px;height:19.4px;border-radius:50%;background:#6f9e8c"></div>
<div style="position:absolute;left:84.3px;top:901.6px;height:24px;line-height:24px;white-space:nowrap;letter-spacing:.18px">Energy Efficiency Project</div>
</div>
</div>
</body></html>
